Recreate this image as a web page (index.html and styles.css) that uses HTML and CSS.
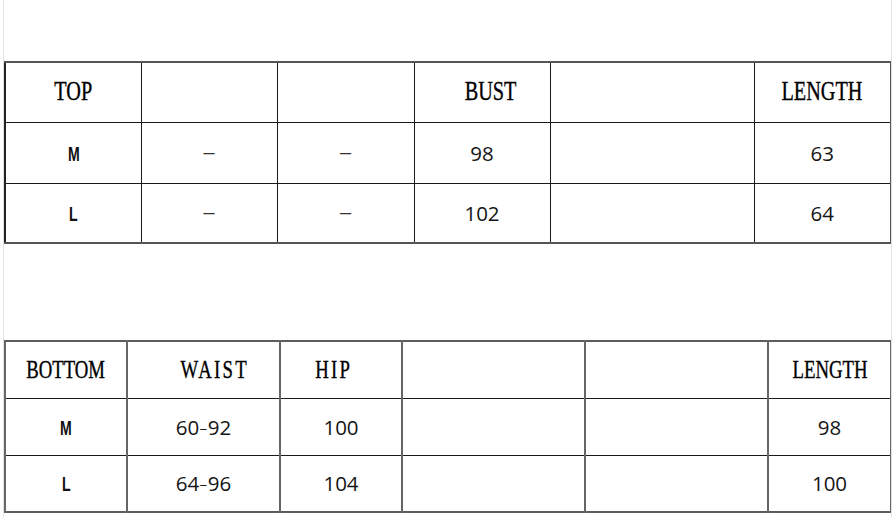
FILE: index.html
```html
<!DOCTYPE html>
<html>
<head>
<meta charset="utf-8">
<link rel="stylesheet" href="styles.css">
</head>
<body>
<div class="page">
  <table class="size top-table">
    <colgroup>
      <col style="width:136px"><col style="width:136px"><col style="width:137px"><col style="width:136px"><col style="width:204px"><col style="width:137px">
    </colgroup>
    <tr class="r1">
      <th><span class="h">TOP</span></th>
      <th></th>
      <th></th>
      <th><span class="h shift-r">BUST</span></th>
      <th></th>
      <th><span class="h">LENGTH</span></th>
    </tr>
    <tr class="r2">
      <td><span class="sz">M</span></td>
      <td class="dash">–</td>
      <td class="dash">–</td>
      <td>98</td>
      <td></td>
      <td>63</td>
    </tr>
    <tr class="r3">
      <td><span class="sz">L</span></td>
      <td class="dash">–</td>
      <td class="dash">–</td>
      <td>102</td>
      <td></td>
      <td>64</td>
    </tr>
  </table>

  <table class="size bottom-table">
    <colgroup>
      <col style="width:122px"><col style="width:153px"><col style="width:122px"><col style="width:183px"><col style="width:183px"><col style="width:123px">
    </colgroup>
    <tr>
      <th><span class="h sm">BOTTOM</span></th>
      <th><span class="h sm wide waist">WAIST</span></th>
      <th><span class="h sm wide hip">HIP</span></th>
      <th></th>
      <th></th>
      <th><span class="h sm">LENGTH</span></th>
    </tr>
    <tr>
      <td><span class="sz">M</span></td>
      <td>60<span class="hy">-</span>92</td>
      <td>100</td>
      <td></td>
      <td></td>
      <td>98</td>
    </tr>
    <tr>
      <td><span class="sz">L</span></td>
      <td>64<span class="hy">-</span>96</td>
      <td>104</td>
      <td></td>
      <td></td>
      <td>100</td>
    </tr>
  </table>
</div>
</body>
</html>
```
FILE: styles.css
```css
html, body {
  margin: 0;
  padding: 0;
  background: #fff;
}
.page {
  margin-left: 3px;
  width: 887px;
  height: 517px;
  border-left: 1px solid #e2e2e2;
  border-right: 1px solid #e2e2e2;
  box-sizing: content-box;
  overflow: hidden;
}
.size {
  border-collapse: collapse;
  table-layout: fixed;
  width: 886px;
  margin-left: 0;
}
.size th, .size td {
  padding: 0;
  text-align: center;
  vertical-align: middle;
  font-family: "Open Sans", "Liberation Sans", Arial, sans-serif;
  font-size: 20.5px;
  font-weight: normal;
  color: #151515;
  border: 1px solid #1a1a1a;
  overflow: hidden;
  white-space: nowrap;
}
.size td.dash {
  font-family: "Liberation Sans", Arial, sans-serif;
  font-size: 20px;
  color: #333;
}
.hy {
  display: inline-block;
  transform: scaleX(1.3);
  font-weight: 300;
  margin: 0 1px;
}
.top-table {
  margin-top: 61px;
  border: 2px solid #555;
  border-left-color: #222;
}
.top-table .r1 { height: 60px; }
.top-table .r2 { height: 61px; }
.top-table .r3 { height: 60px; }

.bottom-table {
  margin-top: 96px;
  border: 2px solid #5c5c5c;
  border-left-color: #222;
}
.bottom-table tr { height: 57px; }
.bottom-table th, .bottom-table td {
  border-left: 2px solid #666;
  border-right: 2px solid #666;
}

.h {
  display: inline-block;
  font-family: "Liberation Serif", "Times New Roman", serif;
  font-size: 27px;
  color: #000;
  transform: scaleX(0.75);
  line-height: 1;
  -webkit-text-stroke: 0.35px #000;
}
.h.sm { font-size: 25px; }
.h.wide { letter-spacing: 3px; }
.shift-r { position: relative; left: 9px; }
.waist { position: relative; left: 11px; }
.hip { position: relative; left: -7px; letter-spacing: 5px; }

.sz {
  display: inline-block;
  font-family: "Liberation Sans", Arial, sans-serif;
  font-size: 21px;
  font-weight: bold;
  transform: scaleX(0.67);
  color: #111;
}
```
